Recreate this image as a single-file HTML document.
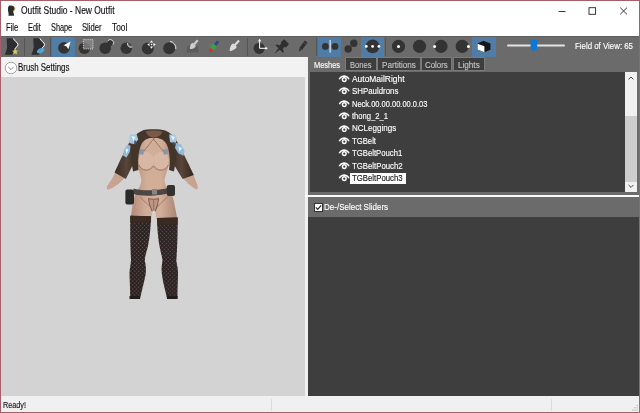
<!DOCTYPE html>
<html><head><meta charset="utf-8"><title>Outfit Studio - New Outfit</title>
<style>
*{box-sizing:border-box;margin:0;padding:0}
html,body{width:640px;height:413px;overflow:hidden;background:#fff}
body{font-family:"Liberation Sans",sans-serif;font-size:9.3px;color:#000;position:relative}
.abs{position:absolute}
#win{position:absolute;left:0;top:0;width:640px;height:413px;background:#fff;border:1px solid #a55f68;overflow:hidden}
.t{position:absolute;white-space:nowrap;line-height:12px;height:12px;transform-origin:0 50%;-webkit-text-stroke:0.15px currentColor}
#title{left:20px;top:4px;font-size:9.6px;color:#111}
.menu{top:21px;font-size:9.4px;color:#111}
#toolbar{left:0;top:35.400px;width:638px;height:20.400px;background:#6b6b6b;border-top:1px solid #5e5e5e}
.sel{position:absolute;top:0;height:19.400px;background:#507ca6}
.sep{position:absolute;top:0.500px;width:1px;height:18.500px;background:#555}
#brush{left:0;top:56px;width:307px;height:21px;background:#f2f2f2}
#view{left:0;top:76px;width:304px;height:319.500px;background:#d3d3d3}
#split{left:304px;top:56px;width:3px;height:340px;background:#f0f0f0}
#right{left:307px;top:56px;width:331px;height:340px;background:#6b6b6b}
#list{left:309px;top:71px;width:315px;height:120px;background:#3e3e3e}
#sb{left:624px;top:71px;width:11.500px;height:120px;background:#f0f0f0}
#thumb{left:624px;top:115px;width:11.500px;height:65.500px;background:#cdcdcd}
#hline{left:304px;top:194px;width:334px;height:2px;background:#fafafa}
#sliders{left:307px;top:216px;width:331px;height:179px;background:#3e3e3e}
#status{left:0;top:395px;width:638px;height:16px;background:#f0f0f0}
.tab{position:absolute;top:56.9px;height:12px;background:#3d3d3d;box-shadow:0 0 0 0.8px #7e7e7e}
.row{position:absolute;left:350.5px;color:#fff;font-size:9.3px;line-height:12px;height:12px;white-space:nowrap}
.eye{position:absolute;left:337.200px;width:12.300px;height:7.800px}
</style></head><body>
<div id="win">
<!-- title bar -->
<svg class="abs" style="left:6px;top:4px" width="10" height="12" viewBox="0 0 10 12"><path d="M2.2 0.6 C4.5 0 7 0.6 7.6 2.4 C8.2 4 7.2 5.2 6.4 6 C6 6.8 6.8 8 7.2 10.8 L1.4 10.8 C2 8.6 1.2 7.2 1 5.4 C0.8 3.4 1 1.6 2.2 0.6Z" fill="#2b2b2b"/><path d="M7 1.6 C8.6 3 8 4.8 6.6 6" stroke="#d9a441" stroke-width="0.9" fill="none"/></svg>
<svg class="abs" style="left:556px;top:4px" width="76" height="12" viewBox="0 0 76 12"><g stroke="#222" stroke-width="0.9" fill="none"><path d="M1.5 6.5H8.5"/><rect x="32" y="2.7" width="6.6" height="6.6"/><path d="M63.2 2.6L70 9.4M70 2.6L63.2 9.4"/></g></svg>
<!-- menu -->
<!-- toolbar -->
<div class="abs" id="toolbar">
  <div class="sel" style="left:51.300px;width:23px"></div>
  <div class="sel" style="left:316.600px;width:23.800px"></div>
  <div class="sel" style="left:359.600px;width:23.700px"></div>
  <div class="sel" style="left:470.800px;width:24.200px"></div>
  <div class="sep" style="left:22.8px"></div>
  <div class="sep" style="left:49.400px"></div>
  <div class="sep" style="left:245.6px"></div>
  <div class="sep" style="left:314.6px"></div>
  <div class="sep" style="left:383.600px"></div>
  <svg class="abs" style="left:0;top:-0.4px" width="638" height="20" viewBox="1 37 638 20">
    <!-- new project -->
    <path d="M6.6 38.300 L12.9 38.300 C14.0 41 17.2 42.600 17.4 44.400 C17.4 46.400 15.0 47.600 14.5 49 C13.6 51 13.0 53 12.6 54.800 L4.7 54.800 C6.6 51 7.4 48 7.0 45Z" fill="#2c2c31"/>
    <path d="M13.3 38.400 C14.4 41 17.8 42.600 18.0 44.400 C18.0 46.400 15.4 47.600 14.8 49.200" stroke="#fff" stroke-width="1" fill="none"/>
    <path d="M15.200 48.600 L16.100 50.600 L18.200 50.800 L16.600 52.200 L17.100 54.400 L15.200 53.200 L13.300 54.400 L13.800 52.200 L12.200 50.800 L14.300 50.600Z" fill="#dccb52"/>
    <!-- load project -->
    <path d="M33.2 38.300 L39.5 38.300 C40.6 41 43.8 42.600 44.0 44.400 C44.0 46.400 41.6 47.600 41.1 49 C40.2 51 39.6 53 39.2 54.800 L31.3 54.800 C33.2 51 34.0 48 33.6 45Z" fill="#2c2c31"/>
    <path d="M39.9 38.400 C41.0 41 44.4 42.600 44.6 44.400 C44.6 46.400 42.0 47.600 41.4 49.200" stroke="#fff" stroke-width="1" fill="none"/>
    <path d="M36.800 51.600 C37.400 49 41 47.400 43.600 48.200 C45 49 44.600 51.400 42.400 52.600 C40.400 53.800 37.200 54.200 36.800 51.600Z" fill="#52a2d4"/>
    <!-- select -->
    <circle cx="64" cy="47.800" r="5.900" fill="#333"/>
    <path d="M70.600 41.600 L68.400 49.200 L66.600 46.400 L63.600 45.200Z" fill="#fff"/>
    <!-- mask -->
    <circle cx="84.4" cy="48.2" r="5.8" fill="#333"/>
    <rect x="83.400" y="39.600" width="9.600" height="9.400" fill="#8a8a8a" fill-opacity="0.75" stroke="#e8e8e8" stroke-width="0.8" stroke-dasharray="1.1 1"/>
    <!-- inflate -->
    <circle cx="105.2" cy="48.2" r="5.8" fill="#333"/>
    <circle cx="110.2" cy="43" r="2.9" fill="#333"/>
    <path d="M107.8 40.8 A3.1 3.1 0 0 1 112.9 44.8" stroke="#eee" stroke-width="0.8" fill="none"/>
    <!-- deflate -->
    <circle cx="126.3" cy="48.2" r="5.8" fill="#333"/>
    <path d="M127.6 43 A3.4 3.4 0 0 0 132.2 47" stroke="#eee" stroke-width="0.9" fill="#6b6b6b"/>
    <!-- move -->
    <circle cx="147.800" cy="48.400" r="6" fill="#333"/>
    <g fill="#fff"><path d="M151.500 40.400l1.600 2.200h-3.200z"/><path d="M151.500 48.800l1.600-2.200h-3.200z"/><path d="M147.300 44.600l2.200-1.600v3.200z"/><path d="M155.700 44.600l-2.200-1.600v3.200z"/><circle cx="151.500" cy="44.600" r="0.800"/></g>
    <!-- smooth -->
    <circle cx="169.2" cy="48.2" r="6" fill="#333"/>
    <path d="M170 41.4 A6.8 6.8 0 0 1 175.8 49" stroke="#eee" stroke-width="0.9" fill="none"/>
    <!-- weight brush -->
    <path d="M187 47.5 C188 45 191 44.600 193 45.600 L198.400 46.500 L198.400 52.400 L186.800 52.400Z" fill="#5c5c5c"/>
    <g transform="translate(193.400 45.200) rotate(42)"><rect x="-1.100" y="-6.600" width="2.200" height="5.800" fill="#cdcdcd"/><path d="M-2.400 -1.200 L2.400 -1.200 C3.200 1.500 1.600 3.600 0 5.200 C-1.600 3.600 -3.200 1.500 -2.400 -1.200Z" fill="#cdcdcd"/></g>
    <!-- color brush -->
    <g transform="translate(213.400 47) rotate(40)"><rect x="-1.400" y="-7.400" width="2.800" height="5" fill="#2c4a86"/><path d="M-2.300 -2.600 L2.300 -2.600 C3 0 2.800 1.400 2.300 2.600 L-2.300 2.600 C-2.800 1.400 -3 0 -2.300 -2.600Z" fill="#3f9c4c"/><path d="M-2.300 2.600 L2.300 2.600 C1.800 4.400 0.900 5.600 0 6.800 C-0.900 5.600 -1.800 4.400 -2.300 2.600Z" fill="#c23b2e"/></g>
    <!-- alpha brush -->
    <g transform="translate(234.200 45.900) rotate(42)"><rect x="-1.100" y="-7.200" width="2.200" height="6.400" fill="#dcdcdc"/><path d="M-2.500 -1.200 L2.500 -1.200 C3.400 2 1.700 4.800 0 6.800 C-1.700 4.800 -3.400 2 -2.500 -1.200Z" fill="#dcdcdc"/></g>
    <!-- transform -->
    <circle cx="259.200" cy="48.300" r="5.600" fill="#333"/>
    <path d="M259.600 40.600 V48.300 H266.200" stroke="#fff" stroke-width="1" fill="none"/>
    <path d="M259.600 38.800l1.600 2.400h-3.200z M267.800 48.300l-2.200 1.500v-3z" fill="#fff"/>
    <!-- pin -->
    <g transform="translate(280.700 47.500) scale(1.200) rotate(45)" fill="#2f2f2f"><rect x="-3" y="-7" width="6" height="4.200" rx="0.800"/><rect x="-2" y="-3.200" width="4" height="3.400"/><path d="M-4.600 1.800 C-4.600 0.400 -3 -0.200 -2 -0.200 L2 -0.200 C3 -0.200 4.600 0.400 4.600 1.800Z"/><path d="M-0.900 1.600 L0.900 1.600 L0 7.500Z"/></g>
    <!-- pencil -->
    <g transform="translate(302.500 46.600) rotate(36)"><rect x="-1.700" y="-6.200" width="3.400" height="9" fill="#303030"/><rect x="-1.700" y="-4.600" width="3.400" height="1.200" fill="#4a4a4a"/><path d="M-1.700 2.800 L1.700 2.800 L0 6.400Z" fill="#3a3a3a"/></g>
    <!-- x mirror -->
    <circle cx="325.4" cy="46.4" r="3.4" fill="#333"/><circle cx="335" cy="46.4" r="3.4" fill="#333"/>
    <path d="M330.1 40 V52.6" stroke="#fff" stroke-width="1"/>
    <!-- connected -->
    <circle cx="348.2" cy="49" r="3.7" fill="#333"/><circle cx="353.8" cy="43.2" r="3.7" fill="#333"/>
    <!-- global collision -->
    <circle cx="372.600" cy="46.400" r="6.800" fill="#333"/>
    <g fill="#fff"><circle cx="366.300" cy="46.400" r="1.400"/><circle cx="372.600" cy="46.400" r="1.400"/><circle cx="378.900" cy="46.400" r="1.400"/></g>
    <!-- brush sizes -->
    <circle cx="398.500" cy="46.400" r="6.600" fill="#333"/><circle cx="398.500" cy="46.400" r="1.500" fill="#fff"/>
    <circle cx="419.5" cy="46.4" r="6.6" fill="#333"/>
    <circle cx="441" cy="46.4" r="6.6" fill="#333"/><circle cx="434.6" cy="46.4" r="1.500" fill="#fff"/>
    <circle cx="462.2" cy="46.4" r="6.6" fill="#333"/><circle cx="468.4" cy="46.4" r="1.500" fill="#fff"/>
    <!-- cube -->
    <path d="M477.6 43.6 L483.4 40.8 L490.4 43.6 L490.4 49.8 L484.4 52.2 L477.6 49.6Z" fill="#151515"/>
    <path d="M477.6 43.8 L484.4 46.2 L484.4 52.2 L477.6 49.6Z" fill="#fff"/>
    <!-- FOV slider -->
    <rect x="507" y="44.4" width="58" height="2" rx="1" fill="#e4e4e4"/>
    <path d="M530.6 39.8 H537.2 V48.6 L533.9 51.4 L530.6 48.6Z" fill="#0a78d6"/>
  </svg>
  </div>
<!-- brush settings -->
<div class="abs" id="brush"></div>
<svg class="abs" style="left:3px;top:60px" width="14" height="14" viewBox="0 0 14 14"><circle cx="7" cy="7" r="5.8" fill="#fdfdfd" stroke="#8f8f8f" stroke-width="0.8"/><path d="M4.4 6l2.6 2.6L9.6 6" stroke="#777" stroke-width="0.9" fill="none"/></svg>
<!-- viewport -->
<div class="abs" id="view"></div>
<svg class="abs" style="left:0;top:0" width="306" height="400" viewBox="1 1 306 400">
<defs>
<filter id="bl" x="-10%" y="-10%" width="120%" height="120%"><feGaussianBlur stdDeviation="0.55"/></filter>
<pattern id="net" width="2.800" height="2.800" patternUnits="userSpaceOnUse" patternTransform="rotate(45)"><rect width="2.800" height="2.800" fill="#241d1f"/><rect x="0.700" y="0.700" width="1.400" height="1.400" fill="#675349"/></pattern>
<linearGradient id="skin" x1="0" x2="1"><stop offset="0" stop-color="#b08a76"/><stop offset="0.350" stop-color="#d2ad98"/><stop offset="0.650" stop-color="#d2ad98"/><stop offset="1" stop-color="#a8836f"/></linearGradient>
<linearGradient id="lth" x1="0" x2="1"><stop offset="0" stop-color="#382b24"/><stop offset="0.500" stop-color="#58453a"/><stop offset="1" stop-color="#33271f"/></linearGradient>
</defs>
<g filter="url(#bl)">
<!-- hands / forearms -->
<path d="M115.500 171.500 L125 177.500 C121 182 114 188 108.500 189.500 C106.500 189.500 106.200 187.500 107.500 185.500 C110.500 181.500 113.500 176.500 115.500 171.500Z" fill="#c7a390"/>
<path d="M193 174 L183 177.800 C186 182 192 187.500 196 189.300 C198 189.500 198.300 187.500 197.500 185.500 C196 181.500 194.500 177.500 193 174Z" fill="#c7a390"/>
<!-- sleeves -->
<path d="M133 138.500 C137 139 139 142 138.500 146 C138 152 136 158 133.600 163 C131.500 168 128.500 173.500 125.900 179 L114.600 172.600 C118 165 123.500 153 128.500 144 C129.500 141 131 139 133 138.500Z" fill="url(#lth)"/>
<path d="M174 138.500 C170.500 139 168.500 142 169 146 C169.500 152 171 158 173.200 163 C175.500 168 179.500 173.500 182.700 179 L193.800 175 C190 167 184 154 178.500 145 C177.500 141.500 176 139 174 138.500Z" fill="url(#lth)"/>
<!-- torso -->
<path d="M142 134 L165 134 C168.500 140 170.500 150 169.500 160 C168.800 168 165.500 174 164.500 180.500 C165 187 171 192 173 198 C174.500 204 176 212 177.500 220 L130.500 220 C131.500 212 132.500 204 134 198 C136 192 140.500 187 141.500 180.500 C140.500 174 137.500 168 137 160 C136 150 138 140 142 134Z" fill="url(#skin)"/>
<!-- chest shading -->
<ellipse cx="146" cy="160.500" rx="7.800" ry="8.800" fill="#d8b7a5"/><ellipse cx="161.300" cy="160.500" rx="7.800" ry="8.800" fill="#d8b7a5"/>
<path d="M138.800 165 C141.500 171.500 149.500 172 153.500 166 C157.500 172 165.500 171.500 168.300 165" stroke="#94705f" stroke-width="0.900" fill="none"/>
<path d="M139.500 148.500 l5 1.500 l-1.500 5 l-4.500 -1.500z M167.500 148.500 l-5 1.500 l1.500 5 l4.500 -1.500z" fill="#8a96a6"/>
<path d="M144 151 L153.500 139 L163 151" stroke="#5b4a42" stroke-width="0.500" fill="none"/>
<!-- jacket body -->
<path d="M143 130.300 C148 128.800 160 128.800 165.200 130.600 C170 132.500 174 136 176 141 C177 150 176 161 174 171.500 L169 170 C170.500 160 169.500 150 166.500 144 C164 139.500 158 137 153.800 138.500 C149.500 137 144 139.500 141.500 144 C138.500 150 137.500 160 138.500 170 L133 171.500 C131 161 130.500 150 131.500 141 C133.500 136 138 132.500 143 130.300Z" fill="#43342b"/>
<path d="M145.500 131.500 C150 130.200 158.500 130.200 162.500 131.700 C160.500 136 157 137.500 154 137.500 C151 137.500 147.500 136 145.500 131.500Z" fill="#7a5a47"/>
<!-- pauldrons -->
<path d="M130 134.600 L136.500 134 L138.200 139.500 L134.500 144.200 L129.200 143Z" fill="#a7c8de"/>
<path d="M127.500 144.500 L130.500 146 L129.800 152 L126.500 157.600 L123 155.500 L124 149.500Z" fill="#93bbd8"/>
<path d="M169.200 134.600 L175 134.400 L177 139 L175.500 143.400 L170 142Z" fill="#a7c8de"/>
<path d="M176 142.800 L181 144.500 L184.600 151 L183.500 155.800 L178.500 153.500 L175 148Z" fill="#93bbd8"/>
<path d="M131.500 136 l4 1 l-2 4z M125.500 148.500 l3 1 l-2 4.500z M171 136 l4 1 l-2 3.500z M178.500 146 l3.500 2.500 l-2.500 3z" fill="#e8f4fb"/>
<path d="M134.500 140 l3 2.500 l-3.500 2z M172.500 141.500 l3.500 1.500 l-2 2.500z" fill="#4d5560"/>
<!-- belt -->
<path d="M133.500 188.500 C142 191.500 162 190.500 174 186.500 L174.500 191.500 C163 196 142 197 133.500 194Z" fill="#4c4644"/>
<rect x="152" y="189" width="5" height="5.500" fill="#8a8580"/>
<path d="M140 197 C146 203 150 206 154 210.500 C158 206 163 201 169 195.500" stroke="#7b716c" stroke-width="0.700" fill="none"/>
<path d="M148.500 198.500 C151 199.500 156 199.500 158.500 198.500 C158 204 156.500 208.500 155 211.500 L152.400 211.500 C150.800 208.500 149 204 148.500 198.500Z" fill="#bd9685" stroke="#6a4639" stroke-width="0.800"/><path d="M153.700 200 V210" stroke="#7a5a50" stroke-width="0.700"/>
<!-- pouches -->
<rect x="125.400" y="189.500" width="8.600" height="15" rx="2" fill="#2b2a2b"/>
<rect x="166.800" y="185" width="8.200" height="11" rx="2" fill="#33302f"/>
<!-- leg gap -->
<path d="M152.200 211.500 C152.800 210.600 154.600 210.600 155.200 211.500 L157.200 224 L150.600 224Z" fill="#d3d3d3"/>
<!-- stockings -->
<path d="M130.300 215.700 L151 216.200 C150.800 226 150 236 148 246 C146.500 252 145 256 144.800 260.500 C146 266 146.200 270 145.500 275 C144 283 141.500 291 140.200 298.500 L130 298.500 C130.500 290 129.500 281 129.500 272.500 C129.800 268 130.800 264 131 260.500 C130.500 250 130 232 130.300 215.700Z" fill="url(#net)"/>
<path d="M157 218 L177.600 217.600 C177.800 232 177.300 250 176.300 260.500 C176.800 264 178 268 178 272.500 C178 281 177.300 290 177.500 298.500 L167 298.500 C165.500 291 163 283 162 275 C161.300 270 161.500 266 162.500 260.500 C162 256 160.500 252 159.500 246 C158 238 157.200 228 157 218Z" fill="url(#net)"/>
<path d="M130.300 215.700 L151 216.200 L150.800 223 L130.300 222.500Z" fill="#3b2a22"/>
<path d="M157 218 L177.600 217.600 L177.700 224.500 L157.300 225Z" fill="#3b2a22"/>
<rect x="129.500" y="296" width="10.500" height="3" fill="#231c1c"/><rect x="167" y="296" width="10.500" height="3" fill="#231c1c"/>
</g>
</svg>
<div class="abs" id="split"></div>
<!-- right panel -->
<div class="abs" id="right"></div>
<div class="abs" id="list"></div>
<div class="abs" id="sb"></div>
<div class="abs" id="thumb"></div>
<svg class="abs" style="left:624px;top:71px" width="12" height="120" viewBox="0 0 12 120"><path d="M3.6 7.4L6 5l2.4 2.4M3.6 113L6 115.400l2.4-2.400" stroke="#444" stroke-width="1" fill="none"/></svg>
<div class="abs" style="left:349px;top:171.500px;width:55.500px;height:11.500px;background:#fff"></div>
<svg class="eye" style="top:74.0px" viewBox="0 0 11 7"><path d="M0.500 3.600C2 0.900 4.200 0.300 5.500 0.300C6.800 0.300 9 0.900 10.500 3.600L9.300 4.100C8.200 2.300 6.800 1.900 5.500 1.900C4.200 1.900 2.800 2.300 1.700 4.100Z" fill="#fff"/><circle cx="5.600" cy="4.100" r="2.300" fill="#fff"/><circle cx="5.600" cy="4.200" r="1" fill="#3e3e3e"/></svg><svg class="eye" style="top:86.4px" viewBox="0 0 11 7"><path d="M0.500 3.600C2 0.900 4.200 0.300 5.500 0.300C6.800 0.300 9 0.900 10.500 3.600L9.300 4.100C8.200 2.300 6.800 1.900 5.500 1.900C4.200 1.900 2.800 2.300 1.700 4.100Z" fill="#fff"/><circle cx="5.600" cy="4.100" r="2.300" fill="#fff"/><circle cx="5.600" cy="4.200" r="1" fill="#3e3e3e"/></svg><svg class="eye" style="top:98.8px" viewBox="0 0 11 7"><path d="M0.500 3.600C2 0.900 4.200 0.300 5.500 0.300C6.800 0.300 9 0.900 10.500 3.600L9.300 4.100C8.200 2.300 6.800 1.900 5.500 1.900C4.200 1.900 2.800 2.300 1.700 4.100Z" fill="#fff"/><circle cx="5.600" cy="4.100" r="2.300" fill="#fff"/><circle cx="5.600" cy="4.200" r="1" fill="#3e3e3e"/></svg><svg class="eye" style="top:111.2px" viewBox="0 0 11 7"><path d="M0.500 3.600C2 0.900 4.200 0.300 5.500 0.300C6.800 0.300 9 0.900 10.500 3.600L9.300 4.100C8.200 2.300 6.800 1.900 5.500 1.900C4.200 1.900 2.800 2.300 1.700 4.100Z" fill="#fff"/><circle cx="5.600" cy="4.100" r="2.300" fill="#fff"/><circle cx="5.600" cy="4.200" r="1" fill="#3e3e3e"/></svg><svg class="eye" style="top:123.6px" viewBox="0 0 11 7"><path d="M0.500 3.600C2 0.900 4.200 0.300 5.500 0.300C6.800 0.300 9 0.900 10.500 3.600L9.300 4.100C8.200 2.300 6.800 1.900 5.500 1.900C4.200 1.900 2.800 2.300 1.700 4.100Z" fill="#fff"/><circle cx="5.600" cy="4.100" r="2.300" fill="#fff"/><circle cx="5.600" cy="4.200" r="1" fill="#3e3e3e"/></svg><svg class="eye" style="top:136.0px" viewBox="0 0 11 7"><path d="M0.500 3.600C2 0.900 4.200 0.300 5.500 0.300C6.800 0.300 9 0.900 10.500 3.600L9.300 4.100C8.200 2.300 6.800 1.900 5.500 1.900C4.200 1.900 2.800 2.300 1.700 4.100Z" fill="#fff"/><circle cx="5.600" cy="4.100" r="2.300" fill="#fff"/><circle cx="5.600" cy="4.200" r="1" fill="#3e3e3e"/></svg><svg class="eye" style="top:148.4px" viewBox="0 0 11 7"><path d="M0.500 3.600C2 0.900 4.200 0.300 5.500 0.300C6.800 0.300 9 0.900 10.500 3.600L9.300 4.100C8.200 2.300 6.800 1.900 5.500 1.900C4.200 1.900 2.800 2.300 1.700 4.100Z" fill="#fff"/><circle cx="5.600" cy="4.100" r="2.300" fill="#fff"/><circle cx="5.600" cy="4.200" r="1" fill="#3e3e3e"/></svg><svg class="eye" style="top:160.8px" viewBox="0 0 11 7"><path d="M0.500 3.600C2 0.900 4.200 0.300 5.500 0.300C6.800 0.300 9 0.900 10.500 3.600L9.300 4.100C8.200 2.300 6.800 1.900 5.500 1.900C4.200 1.900 2.800 2.300 1.700 4.100Z" fill="#fff"/><circle cx="5.600" cy="4.100" r="2.300" fill="#fff"/><circle cx="5.600" cy="4.200" r="1" fill="#3e3e3e"/></svg><svg class="eye" style="top:173.2px" viewBox="0 0 11 7"><path d="M0.500 3.600C2 0.900 4.200 0.300 5.500 0.300C6.800 0.300 9 0.900 10.500 3.600L9.300 4.100C8.200 2.300 6.800 1.900 5.500 1.900C4.200 1.900 2.800 2.300 1.700 4.100Z" fill="#fff"/><circle cx="5.600" cy="4.100" r="2.300" fill="#fff"/><circle cx="5.600" cy="4.200" r="1" fill="#3e3e3e"/></svg>
<div class="abs" id="hline"></div>
<div class="abs" id="sliders"></div>
<svg class="abs" style="left:313px;top:202px" width="9" height="9" viewBox="0 0 9 9"><rect x="0.5" y="0.5" width="8" height="8" fill="#fff" stroke="#333" stroke-width="1"/><path d="M1.800 4.400L3.700 6.400L7.200 2.400" stroke="#222" stroke-width="1.200" fill="none"/></svg>
<!-- status -->
<div class="abs" id="status"></div>
<div class="abs" style="left:270px;top:398px;width:1px;height:12px;background:#dcdcdc"></div>
<div class="abs" style="left:549.500px;top:398px;width:1px;height:12px;background:#dcdcdc"></div>
<svg class="abs" style="left:630px;top:403px" width="8" height="8" viewBox="0 0 8 8"><g fill="#b5b5b5"><rect x="5.500" y="5.500" width="1.200" height="1.200"/><rect x="3.200" y="5.500" width="1.200" height="1.200"/><rect x="5.500" y="3.200" width="1.200" height="1.200"/><rect x="0.900" y="5.500" width="1.200" height="1.200"/><rect x="3.200" y="3.200" width="1.200" height="1.200"/><rect x="5.500" y="0.900" width="1.200" height="1.200"/></g></svg>
<div class="tab" style="left:345.3px;width:29.6px"></div>
<div class="tab" style="left:377.0px;width:41.5px"></div>
<div class="tab" style="left:420.5px;width:29.6px"></div>
<div class="tab" style="left:452.6px;width:30.4px"></div>
<div class="t" style="left:19.80px;top:3.80px;font-size:10.1px;color:#101010;transform:scaleX(0.8375)">Outfit Studio - New Outfit</div>
<div class="t" style="left:4.70px;top:20.70px;font-size:10.1px;color:#101010;transform:scaleX(0.7562)">File</div>
<div class="t" style="left:27.00px;top:20.70px;font-size:10.1px;color:#101010;transform:scaleX(0.7354)">Edit</div>
<div class="t" style="left:50.00px;top:20.70px;font-size:10.1px;color:#101010;transform:scaleX(0.7263)">Shape</div>
<div class="t" style="left:81.40px;top:20.70px;font-size:10.1px;color:#101010;transform:scaleX(0.7593)">Slider</div>
<div class="t" style="left:111.20px;top:20.70px;font-size:10.1px;color:#101010;transform:scaleX(0.8256)">Tool</div>
<div class="t" style="left:574.00px;top:39.20px;font-size:9.9px;color:#ffffff;transform:scaleX(0.7964)">Field of View: 65</div>
<div class="t" style="left:16.60px;top:60.60px;font-size:10.1px;color:#101010;transform:scaleX(0.7829)">Brush Settings</div>
<div class="t" style="left:312.90px;top:57.60px;font-size:9.9px;color:#ffffff;transform:scaleX(0.7548)">Meshes</div>
<div class="t" style="left:349.10px;top:57.60px;font-size:9.9px;color:#c4c4c4;transform:scaleX(0.7746)">Bones</div>
<div class="t" style="left:380.60px;top:57.60px;font-size:9.9px;color:#c4c4c4;transform:scaleX(0.8234)">Partitions</div>
<div class="t" style="left:424.30px;top:57.60px;font-size:9.9px;color:#c4c4c4;transform:scaleX(0.7987)">Colors</div>
<div class="t" style="left:456.90px;top:57.60px;font-size:9.9px;color:#c4c4c4;transform:scaleX(0.8232)">Lights</div>
<div class="t" style="left:323.40px;top:200.20px;font-size:9.9px;color:#ffffff;transform:scaleX(0.8111)">De-/Select Sliders</div>
<div class="t" style="left:2.00px;top:397.80px;font-size:9.9px;color:#151515;transform:scaleX(0.7349)">Ready!</div>
<div class="t" style="left:350.60px;top:71.80px;font-size:9.9px;color:#ffffff;transform:scaleX(0.8539)">AutoMailRight</div>
<div class="t" style="left:350.60px;top:84.20px;font-size:9.9px;color:#ffffff;transform:scaleX(0.7974)">SHPauldrons</div>
<div class="t" style="left:350.60px;top:96.60px;font-size:9.9px;color:#ffffff;transform:scaleX(0.7587)">Neck.00.00.00.00.0.03</div>
<div class="t" style="left:350.60px;top:109.00px;font-size:9.9px;color:#ffffff;transform:scaleX(0.7732)">thong_2_1</div>
<div class="t" style="left:350.60px;top:121.40px;font-size:9.9px;color:#ffffff;transform:scaleX(0.8131)">NCLeggings</div>
<div class="t" style="left:350.60px;top:133.80px;font-size:9.9px;color:#ffffff;transform:scaleX(0.7809)">TGBelt</div>
<div class="t" style="left:350.60px;top:146.20px;font-size:9.9px;color:#ffffff;transform:scaleX(0.7831)">TGBeltPouch1</div>
<div class="t" style="left:350.60px;top:158.60px;font-size:9.9px;color:#ffffff;transform:scaleX(0.7877)">TGBeltPouch2</div>
<div class="t" style="left:350.60px;top:171.00px;font-size:9.9px;color:#151515;transform:scaleX(0.7877)">TGBeltPouch3</div>
</div>
</body></html>
